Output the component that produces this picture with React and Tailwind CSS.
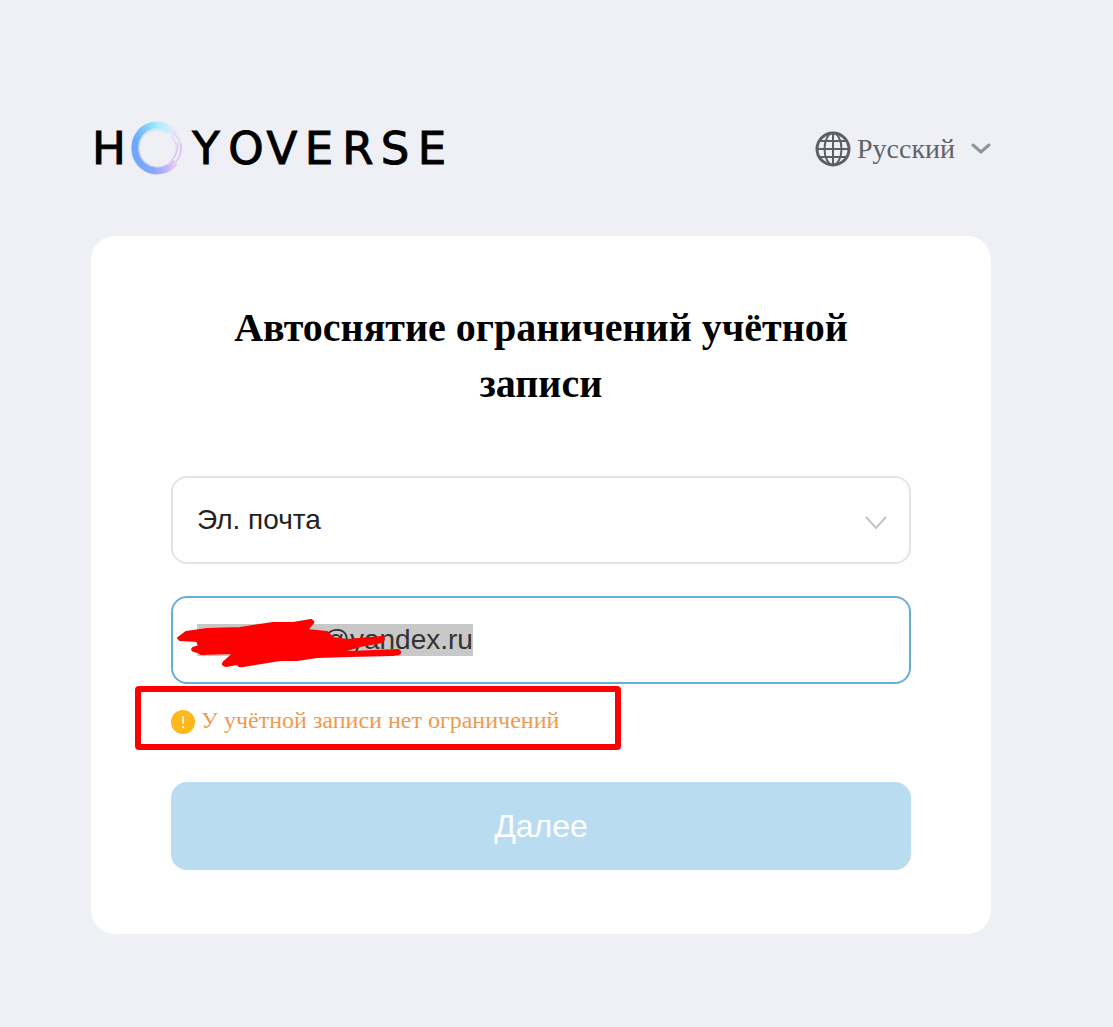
import { useEffect, useRef, useState } from 'react'

function Logo() {
  return (
    <svg width="358" height="56" viewBox="0 0 358 56" role="img" aria-label="HOYOVERSE">
      <defs>
        <linearGradient id="ring" x1="0" y1="0.6" x2="1" y2="0.4">
          <stop offset="0" stopColor="#6fa8fb" />
          <stop offset="0.4" stopColor="#86d0fb" />
          <stop offset="0.7" stopColor="#a8f0fa" />
          <stop offset="1" stopColor="#dfeaf8" />
        </linearGradient>
        <linearGradient id="ringLow" x1="0" y1="0" x2="1" y2="0">
          <stop offset="0" stopColor="#6fa8fb" />
          <stop offset="0.5" stopColor="#8aa6fc" />
          <stop offset="1" stopColor="#dcc0f8" />
        </linearGradient>
      </defs>
      <text
        x="18 115 155 191 228 267 304 341"
        y="44"
        textAnchor="middle"
        fill="#000"
        stroke="#000"
        strokeWidth="1"
        fontSize="45"
        fontFamily="'DejaVu Sans', sans-serif"
      >
        HYOVERSE
      </text>
      <g fill="none" strokeLinecap="round">
        <path d="M44 28 A22 22 0 0 1 82 12" stroke="url(#ring)" strokeWidth="7" />
        <path d="M44 28 A22 22 0 0 0 82 44" stroke="url(#ringLow)" strokeWidth="7" />
        <path d="M48 29 A18 18 0 0 1 76 13" stroke="#c4dcfc" strokeWidth="1" />
        <path d="M48 30 A19 19 0 0 0 80 42" stroke="#bccdfc" strokeWidth="1" />
        <path d="M82 12 Q92 22 89 33 Q87 41 82 45" stroke="#ead6f7" strokeWidth="2" />
        <path d="M81 17 Q87 25 85 32 Q83 39 78 43" stroke="#e6dcf9" strokeWidth="2" />
        <path d="M90 24 Q92 34 85 42 M87 23 Q87 35 80 41" stroke="#dcb9f6" strokeWidth="1" />
      </g>
    </svg>
  )
}

function GlobeIcon() {
  return (
    <svg width="36" height="36" viewBox="0 0 36 36" fill="none" stroke="#5d5f64" strokeWidth="2" aria-hidden="true">
      <circle cx="18" cy="18" r="16" strokeWidth="3" />
      <ellipse cx="18" cy="18" rx="8.5" ry="16" />
      <path d="M18 2v32M2 18h32M5 10h26M5 26h26" />
    </svg>
  )
}

function Scribble() {
  return (
    <svg
      className="absolute left-1 top-5 pointer-events-none"
      width="232"
      height="52"
      viewBox="175 616 232 52"
      fill="#f00"
      stroke="#f00"
      strokeWidth="2"
      strokeLinecap="round"
      strokeLinejoin="round"
      aria-hidden="true"
    >
      <path d="M178 638 L186 632 L207 629 L240 628 L273 623 L293 623 L311 620 Q315 622 312 624 L307 630 L327 632 L333 638 L347 640 L382 637 Q386 639 382 642 L360 646 L340 652 L350 652 L398 650 Q402 652 399 654 L393 655 L350 656 L317 657 L297 660 L280 660 L243 666 Q239 667 237 664 L226 666 Q221 665 224 662 L234 653 L201 654 L198 652 Q190 651 193 648 L199 646 L197 641 L180 640 Z" />
    </svg>
  )
}

export default function App() {
  const [language, setLanguage] = useState('ru')
  const [method, setMethod] = useState('email')
  const [account, setAccount] = useState('username@yandex.ru')
  const accountRef = useRef(null)

  useEffect(() => {
    accountRef.current.focus()
    accountRef.current.select()
  }, [])

  return (
    <div className="min-h-screen bg-[#eff0f5] pt-30 pb-23 pl-[91px] pr-[122px] font-['Liberation_Serif',serif]">
      <header className="flex items-center justify-between mb-15">
        <a href="#home">
          <Logo />
        </a>
        <div className="relative flex items-center gap-1.5 pt-0.5">
          <GlobeIcon />
          <select
            aria-label="Язык"
            value={language}
            onChange={(e) => setLanguage(e.target.value)}
            className="appearance-none bg-transparent pr-9 text-[28px] leading-9 text-[#606266] focus:outline-none"
          >
            <option value="ru">Русский</option>
          </select>
          <svg className="absolute right-0 pointer-events-none" width="20" height="12" viewBox="0 0 20 12" fill="none" aria-hidden="true">
            <path d="M2 2l8 7 8-7" stroke="#909399" strokeWidth="3" strokeLinecap="round" />
          </svg>
        </div>
      </header>

      <main className="bg-white rounded-3xl px-20 py-16">
        <h1 className="text-[40px] leading-14 font-bold text-black text-center mb-16">
          Автоснятие ограничений учётной записи
        </h1>

        <form onSubmit={(e) => e.preventDefault()}>
          <div className="relative mb-8">
            <select
              aria-label="Способ"
              value={method}
              onChange={(e) => setMethod(e.target.value)}
              className="appearance-none w-full h-22 px-6 rounded-2xl border-2 border-[#e4e4e6] bg-white text-[28px] text-[#222] font-['Liberation_Sans',sans-serif] focus:outline-none"
            >
              <option value="email">Эл. почта</option>
            </select>
            <svg className="absolute right-6 top-10 pointer-events-none" width="22" height="14" viewBox="0 0 22 14" fill="none" aria-hidden="true">
              <path d="M1 1l10 11L21 1" stroke="#c0c4cc" strokeWidth="2" />
            </svg>
          </div>

          <div className="relative">
            <input
              ref={accountRef}
              type="text"
              aria-label="Эл. почта"
              aria-describedby="account-hint"
              value={account}
              onChange={(e) => setAccount(e.target.value)}
              className="block w-full h-22 px-6 rounded-2xl border-2 border-[#67aed8] bg-white text-[28px] text-[#333] font-['Liberation_Sans',sans-serif] selection:bg-[#c8c8c8] selection:text-[#333] focus:outline-none"
            />
            <Scribble />
          </div>

          <div className="relative flex items-center gap-1.5 mt-4.5 mb-11">
            <svg width="24" height="24" viewBox="0 0 24 24" className="mt-1" aria-hidden="true">
              <circle cx="12" cy="12" r="12" fill="#ffb71b" />
              <path d="M12 6v8M12 16v2" stroke="#fff" strokeWidth="1.5" />
            </svg>
            <p id="account-hint" className="text-2xl leading-9 text-[#f09a4e]">
              У учётной записи нет ограничений
            </p>
            <div className="absolute -left-9 -top-4 w-[486px] h-16 rounded-sm border-6 border-[#f00] pointer-events-none" />
          </div>

          <button type="submit" className="block w-full h-22 rounded-2xl bg-[#b9dcf1] text-[32px] text-white font-['Liberation_Sans',sans-serif]">
            Далее
          </button>
        </form>
      </main>
    </div>
  )
}
